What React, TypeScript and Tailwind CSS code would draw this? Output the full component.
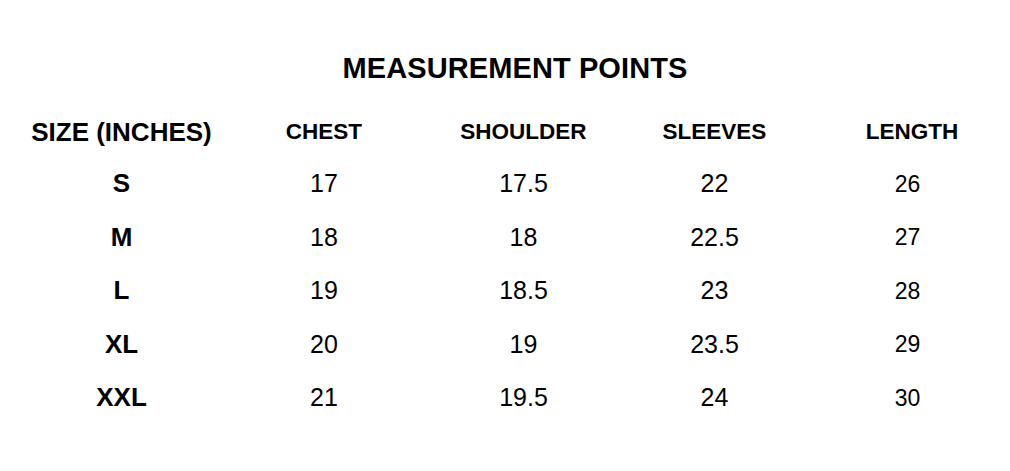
import React from "react";

const rows = [
  ["S", "17", "17.5", "22", "26"],
  ["M", "18", "18", "22.5", "27"],
  ["L", "19", "18.5", "23", "28"],
  ["XL", "20", "19", "23.5", "29"],
  ["XXL", "21", "19.5", "24", "30"],
];

export default function App() {
  return (
    <div
      className="w-[1010px] h-[471px] bg-white text-black overflow-hidden"
      style={{ fontFamily: '"Liberation Sans", Arial, sans-serif' }}
    >
      <div className="pt-[50px] pl-[20px] h-[86px] text-center text-[29px] leading-[36px] font-bold tracking-[0.1px]">
        MEASUREMENT POINTS
      </div>
      <div className="mt-[21px] grid grid-cols-[243px_162px_237px_145px_223px] grid-rows-[50px_repeat(5,53.5px)] items-center text-center">
        <div className="text-[26px] font-bold">SIZE (INCHES)</div>
        <div className="text-[22.5px] font-bold">CHEST</div>
        <div className="text-[22.5px] font-bold">SHOULDER</div>
        <div className="text-[22.5px] font-bold">SLEEVES</div>
        <div className="text-[22.5px] font-bold pl-[27px]">LENGTH</div>
        {rows.map((r) => (
          <React.Fragment key={r[0]}>
            <div className="text-[26px] font-bold">{r[0]}</div>
            <div className="text-[25px]">{r[1]}</div>
            <div className="text-[25px]">{r[2]}</div>
            <div className="text-[25px]">{r[3]}</div>
            <div className="text-[23px] pl-[18px]">{r[4]}</div>
          </React.Fragment>
        ))}
      </div>
    </div>
  );
}
